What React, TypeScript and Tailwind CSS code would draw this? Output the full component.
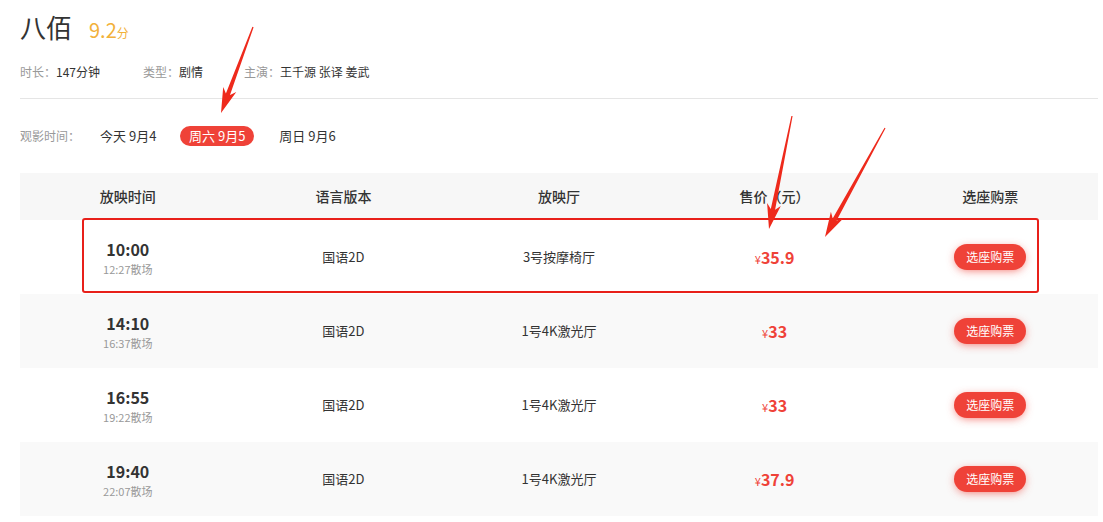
import React from 'react';

interface Show {
  start: string;
  end: string;
  lang: string;
  hall: string;
  price: string;
}

const shows: Show[] = [
  { start: '10:00', end: '12:27散场', lang: '国语2D', hall: '3号按摩椅厅', price: '35.9' },
  { start: '14:10', end: '16:37散场', lang: '国语2D', hall: '1号4K激光厅', price: '33' },
  { start: '16:55', end: '19:22散场', lang: '国语2D', hall: '1号4K激光厅', price: '33' },
  { start: '19:40', end: '22:07散场', lang: '国语2D', hall: '1号4K激光厅', price: '37.9' },
];

const headers = ['放映时间', '语言版本', '放映厅', '售价（元）', '选座购票'];

// annotation arrows drawn over the screenshot: [startX, startY, tipX, tipY]
const arrows: [number, number, number, number][] = [
  [253, 27, 221, 113],
  [792, 116, 769, 229],
  [885, 128, 825, 237],
];

function arrowPoints([x1, y1, x2, y2]: [number, number, number, number]) {
  const dx = x2 - x1;
  const dy = y2 - y1;
  const len = Math.hypot(dx, dy);
  const ux = dx / len;
  const uy = dy / len;
  const nx = -uy;
  const ny = ux;
  const head = 20;
  const neckX = x2 - ux * head;
  const neckY = y2 - uy * head;
  const barbX = x2 - ux * (head + 5);
  const barbY = y2 - uy * (head + 5);
  const pts = [
    [x1 + nx * 0.6, y1 + ny * 0.6],
    [neckX + nx * 2.2, neckY + ny * 2.2],
    [barbX + nx * 7, barbY + ny * 7],
    [x2, y2],
    [barbX - nx * 7, barbY - ny * 7],
    [neckX - nx * 2.2, neckY - ny * 2.2],
    [x1 - nx * 0.6, y1 - ny * 0.6],
  ];
  return pts.map((p) => `${p[0].toFixed(1)},${p[1].toFixed(1)}`).join(' ');
}

export default function App() {
  return (
    <div className="relative w-[1103px] h-[522px] overflow-hidden bg-white text-[#333] font-['Noto_Sans_CJK_SC','Noto_Sans',sans-serif]">
      <div className="pl-5 pr-[5px] pt-[13px]">
        <div className="flex items-baseline h-[28px]">
          <h1 className="text-[26px] leading-[28px] font-normal text-[#333]">八佰</h1>
          <span className="ml-[17px] text-[20px] leading-[28px] text-[#f2b13a]">9.2</span>
          <span className="text-[12px] text-[#f2b13a]">分</span>
        </div>

        <div className="mt-[23px] flex text-[12px] leading-[16px]">
          <div className="w-[123px]">
            <span className="text-[#999]">时长：</span>147分钟
          </div>
          <div className="w-[101px]">
            <span className="text-[#999]">类型：</span>剧情
          </div>
          <div>
            <span className="text-[#999]">主演：</span>王千源 张译 姜武
          </div>
        </div>

        <div className="mt-[18px] border-t border-[#e5e5e5]" />

        <div className="mt-[27px] flex items-center h-[20px] text-[13px]">
          <span className="w-[80px] text-[12px] text-[#999]">观影时间：</span>
          <span className="w-[80px]">今天 9月4</span>
          <span className="h-[20px] px-[9px] rounded-full bg-[#ef4238] text-white leading-[20px]">周六 9月5</span>
          <span className="ml-[25px]">周日 9月6</span>
        </div>

        <div className="mt-[27px]">
          <div className="grid grid-cols-5 h-[47px] items-center bg-[#f7f7f7] text-[14px] font-medium text-center">
            {headers.map((h) => (
              <div key={h}>{h}</div>
            ))}
          </div>
          {shows.map((s, i) => (
            <div
              key={s.start}
              className={`grid grid-cols-5 h-[74px] items-center text-center text-[13px] ${
                i % 2 === 1 ? 'bg-[#f9f9f9]' : 'bg-white'
              }`}
            >
              <div className="flex flex-col items-center">
                <span className="text-[16px] leading-[20px] font-bold">{s.start}</span>
                <span className="mt-[3px] text-[11px] leading-[14px] text-[#999]">{s.end}</span>
              </div>
              <div>{s.lang}</div>
              <div>{s.hall}</div>
              <div className="text-[#ef4238] font-bold">
                <span className="text-[11px] font-normal">¥</span>
                <span className="text-[16px]">{s.price}</span>
              </div>
              <div className="flex justify-center">
                <button className="h-[26px] w-[72px] rounded-full bg-[#ef4238] text-white text-[12px] shadow-[0_2px_10px_-2px_rgba(239,66,56,0.8)]">
                  选座购票
                </button>
              </div>
            </div>
          ))}
        </div>
      </div>

      {/* annotation overlay */}
      <div className="absolute left-[82px] top-[218px] w-[957px] h-[75px] border-2 border-[#e8201a] rounded-[3px] pointer-events-none" />
      <svg className="absolute inset-0 pointer-events-none" width={1103} height={522}>
        {arrows.map((a, i) => (
          <polygon key={i} points={arrowPoints(a)} fill="#ee2a1c" />
        ))}
      </svg>
    </div>
  );
}
